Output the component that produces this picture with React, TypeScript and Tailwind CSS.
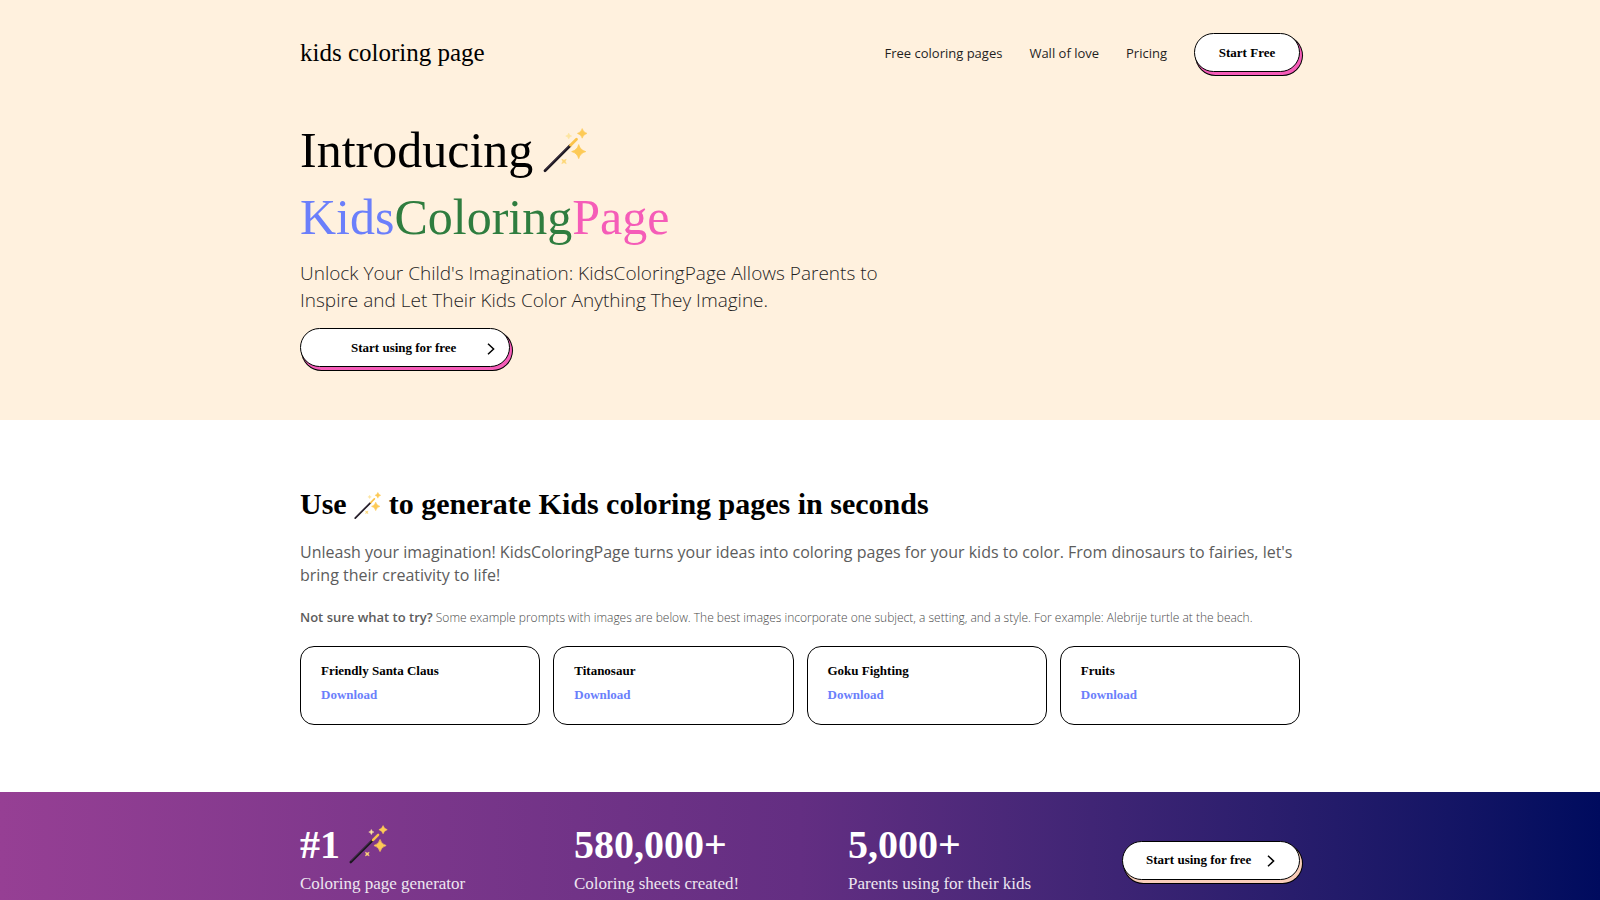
import { ReactNode } from "react";

const SERIF = "font-['Liberation_Serif',serif]";

const navLinks = [
  { label: "Free coloring pages", href: "#free" },
  { label: "Wall of love", href: "#love" },
  { label: "Pricing", href: "#pricing" },
];

const prompts = ["Friendly Santa Claus", "Titanosaur", "Goku Fighting", "Fruits"];

const stats = [
  { value: "#1", label: "Coloring page generator", wand: true },
  { value: "580,000+", label: "Coloring sheets created!", wand: false },
  { value: "5,000+", label: "Parents using for their kids", wand: false },
];

function Wand({ className }: { className: string }) {
  return (
    <svg className={className} viewBox="0 0 46 46" fill="none" aria-hidden="true">
      <path d="M2 42.8 27 17.8" stroke="#1c1720" strokeWidth="2.8" strokeLinecap="round" />
      <path d="M2.5 41.3 26 17.8" stroke="#5b4560" strokeWidth="0.6" strokeLinecap="round" />
      <path d="M27.5 17.3 33.5 11.3" stroke="#fbc34a" strokeWidth="2.8" strokeLinecap="round" />
      <path d="M35.7 16.6q1.4 5.6 7 7q-5.6 1.4-7 7q-1.4-5.6-7-7q5.6-1.4 7-7Z" fill="#fdca56" stroke="#fdca56" strokeWidth="0.8" strokeLinejoin="round" />
      <path d="M39.2.6q1 3.8 4.8 4.8q-3.8 1-4.8 4.8q-1-3.8-4.8-4.8q3.8-1 4.8-4.8Z" fill="#fdca56" stroke="#fdca56" strokeWidth="0.6" strokeLinejoin="round" />
      <path d="M25.7 5.1q.5 2.5 3 3q-2.5.5-3 3q-.5-2.5-3-3q2.5-.5 3-3Z" fill="#fde5a0" stroke="#fde5a0" strokeWidth="0.5" />
      <path d="m18.8 31.2 2.2 1 2.2-1-1 2.2 1 2.2-2.2-1-2.2 1 1-2.2Z" fill="#fdd675" stroke="#fdd675" strokeWidth="0.6" />
    </svg>
  );
}

function Chevron() {
  return (
    <svg className="mt-0.5 h-3 w-2" viewBox="0 0 8 12" fill="none" stroke="black" strokeWidth="1.5" aria-hidden="true">
      <path d="M1 .7 6.6 6 1 11.3" />
    </svg>
  );
}

function PillButton({ className, children }: { className: string; children: ReactNode }) {
  return (
    <button
      className={`flex h-[39px] cursor-pointer items-center rounded-full border border-black bg-white font-['Liberation_Serif',serif] text-[13px] font-bold text-black ${className}`}
    >
      {children}
    </button>
  );
}

const pinkShadow = "shadow-[2px_3px_0_0_#f55cb8,2px_3px_0_1px_#000]";
const peachShadow = "shadow-[2px_3px_0_0_#f9cdb9,2px_3px_0_1px_#000]";

export default function App() {
  return (
    <div className="min-h-screen bg-white font-['Open_Sans',sans-serif] text-black">
      <header className="bg-[#fff1de] px-6 pt-[33px] pb-[53px]">
        <div className="mx-auto max-w-[1000px]">
          <nav className="flex items-center justify-between">
            <a href="#home" className={`${SERIF} text-[25px] leading-8`}>
              kids coloring page
            </a>
            <div className="flex items-center gap-[27px]">
              {navLinks.map((link) => (
                <a key={link.href} href={link.href} className="text-[13px] leading-5 text-[#1f1f1f]">
                  {link.label}
                </a>
              ))}
              <PillButton className={`w-[106px] justify-center ${pinkShadow}`}>Start Free</PillButton>
            </div>
          </nav>

          <h1 className={`${SERIF} mt-[45px] text-[50px] leading-[67px]`}>
            <span className="flex items-center gap-[10px]">
              Introducing <Wand className="h-[46px] w-[46px]" />
            </span>
            <span className="text-[#6b7ffb]">Kids</span>
            <span className="text-[#2f7d3f]">Coloring</span>
            <span className="text-[#f55cb8]">Page</span>
          </h1>
          <p className="mt-[9px] max-w-[600px] text-[19px] leading-[27px] font-light text-[#1f1f1f]">
            Unlock Your Child's Imagination: KidsColoringPage Allows Parents to Inspire and Let Their Kids Color
            Anything They Imagine.
          </p>
          <PillButton className={`mt-[14px] w-[210px] justify-between pr-[14px] pl-[50px] ${pinkShadow}`}>
            Start using for free
            <Chevron />
          </PillButton>
        </div>
      </header>

      <section className="px-6 pt-[66px] pb-[67px]">
        <div className="mx-auto max-w-[1000px]">
          <h2 className={`${SERIF} flex items-center gap-[7px] text-[30px] leading-9 font-bold`}>
            Use <Wand className="mt-1 h-7 w-7" /> to generate Kids coloring pages in seconds
          </h2>
          <p className="mt-[19px] text-[16px] leading-[23px] text-[#5c5c5c]">
            Unleash your imagination! KidsColoringPage turns your ideas into coloring pages for your kids to color. From
            dinosaurs to fairies, let's bring their creativity to life!
          </p>
          <p className="mt-5 text-[12px] leading-5 font-light text-[#4a4a4a]">
            <strong className="text-[13px] font-semibold text-[#5c5c5c]">Not sure what to try?</strong> Some example
            prompts with images are below. The best images incorporate one subject, a setting, and a style. For example:
            Alebrije turtle at the beach.
          </p>
          <div className="mt-[18px] grid grid-cols-4 gap-[13px]">
            {prompts.map((prompt) => (
              <div
                key={prompt}
                className={`${SERIF} rounded-[14px] border border-black px-5 pt-3 pb-[17px] text-[13px] leading-6 font-bold`}
              >
                <h3>{prompt}</h3>
                <a href="#download" className="text-[#6b7ffb]">
                  Download
                </a>
              </div>
            ))}
          </div>
        </div>
      </section>

      <section
        className={`${SERIF} bg-linear-to-r from-[#963f94] via-[#632e82] to-[#000b5e] px-6 pt-[29px] pb-7 text-white`}
      >
        <div className="mx-auto flex max-w-[1000px] items-center">
          {stats.map((stat) => (
            <div key={stat.value} className="flex-1">
              <div className="flex h-12 items-center gap-[9px] text-[40px] leading-[48px] font-bold">
                {stat.value}
                {stat.wand && <Wand className="h-10 w-10" />}
              </div>
              <div className="mt-[3px] pb-[3px] text-[17px] leading-6 text-[#ede6f0]">{stat.label}</div>
            </div>
          ))}
          <PillButton className={`w-[178px] justify-between pr-6 pl-[23px] ${peachShadow}`}>
            Start using for free
            <Chevron />
          </PillButton>
        </div>
      </section>
    </div>
  );
}
